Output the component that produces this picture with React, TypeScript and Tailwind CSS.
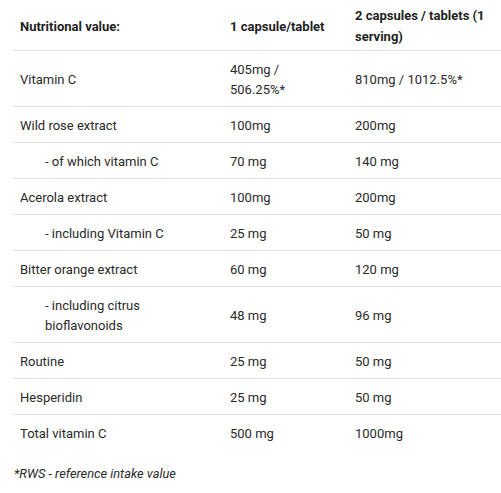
import React from "react";

type Row = { name: React.ReactNode; a: React.ReactNode; b: React.ReactNode; sub?: boolean; last?: boolean };

const rows: Row[] = [
  { name: "Vitamin C", a: <>405mg /<br />506.25%*</>, b: "810mg / 1012.5%*" },
  { name: "Wild rose extract", a: "100mg", b: "200mg" },
  { name: "- of which vitamin C", a: "70 mg", b: "140 mg", sub: true },
  { name: "Acerola extract", a: "100mg", b: "200mg" },
  { name: "- including Vitamin C", a: "25 mg", b: "50 mg", sub: true },
  { name: "Bitter orange extract", a: "60 mg", b: "120 mg" },
  { name: <>- including citrus<br />bioflavonoids</>, a: "48 mg", b: "96 mg", sub: true },
  { name: "Routine", a: "25 mg", b: "50 mg" },
  { name: "Hesperidin", a: "25 mg", b: "50 mg" },
  { name: "Total vitamin C", a: "500 mg", b: "1000mg", last: true },
];

export default function App() {
  return (
    <div
      className="w-[501px] h-[493px] bg-white text-[#2a2a2a] overflow-hidden"
      style={{ fontFamily: "Roboto, 'Liberation Sans', sans-serif" }}
    >
      <table className="ml-[13px] w-[488px] table-fixed border-collapse text-[13px] leading-[20px]">
        <colgroup>
          <col className="w-[210px]" />
          <col className="w-[125px]" />
          <col className="w-[153px]" />
        </colgroup>
        <thead>
          <tr className="border-b border-[#e3e3e3]">
            <th className="text-left align-middle font-bold text-[#1f1f1f] px-[7px] pt-[5px] pb-[3px] leading-[21px]">
              Nutritional value:
            </th>
            <th className="text-left align-middle font-bold text-[#1f1f1f] px-[7px] pt-[5px] pb-[3px] leading-[21px]">
              1 capsule/tablet
            </th>
            <th className="text-left align-middle font-bold text-[#1f1f1f] px-[7px] pt-[5px] pb-[3px] leading-[21px]">
              2 capsules / tablets (1<br />serving)
            </th>
          </tr>
        </thead>
        <tbody>
          {rows.map((r, i) => (
            <tr key={i} className={r.last ? "" : "border-b border-[#e3e3e3]"}>
              <td className={`align-middle pt-[9px] pb-[6px] pr-[7px] ${r.sub ? "pl-[32px]" : "pl-[7px]"}`}>
                {r.name}
              </td>
              <td className="align-middle pt-[9px] pb-[6px] px-[7px]">{r.a}</td>
              <td className="align-middle pt-[9px] pb-[6px] px-[7px]">{r.b}</td>
            </tr>
          ))}
        </tbody>
      </table>
      <p className="ml-[14px] mt-[14px] text-[12.8px] leading-[20px] italic text-[#2a2a2a]">
        *RWS - reference intake value
      </p>
    </div>
  );
}
